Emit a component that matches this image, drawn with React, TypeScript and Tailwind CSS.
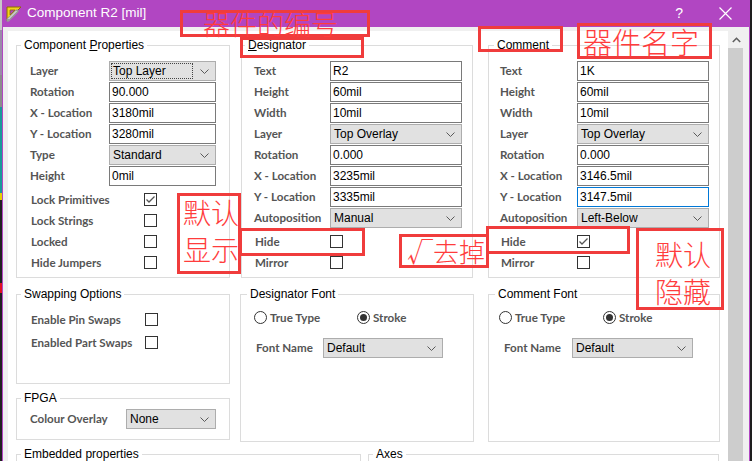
import React from "react";

type FieldRow = {
  label: string;
  value: string;
  kind?: "input" | "select";
  focus?: boolean;
  dotted?: boolean;
};

const labelCls =
  "font-['Lato','Liberation_Sans',sans-serif] font-bold text-[11.6px] text-[#555555] whitespace-nowrap";
const noteText =
  "font-['Noto_Sans_CJK_SC','Noto_Sans',sans-serif] font-light text-[#ff3c3c] leading-none whitespace-nowrap";

const Chevron = () => (
  <svg width="9" height="5" viewBox="0 0 9 5" className="shrink-0">
    <path d="M0.5 0.5 L4.5 4.5 L8.5 0.5" fill="none" stroke="#5a5a5a" strokeWidth="1" />
  </svg>
);

const Select = ({ value, w, dotted }: { value: string; w: string; dotted?: boolean }) => (
  <div className={`${w} h-[20px] border border-[#adadad] bg-[#e1e1e1] flex items-center pl-[2px] pr-[6px]`}>
    <span
      className={`flex-1 pl-[1px] mr-[8px] text-[12px] leading-[14px] text-black ${
        dotted ? "outline outline-1 outline-dotted outline-[#444]" : ""
      }`}
    >
      {value}
    </span>
    <Chevron />
  </div>
);

const Input = ({ value, w, focus }: { value: string; w: string; focus?: boolean }) => (
  <div
    className={`${w} h-[20px] border ${
      focus ? "border-[#0078d7]" : "border-[#7a7a7a]"
    } bg-white flex items-center px-[2px] text-[12px] text-black`}
  >
    {value}
  </div>
);

const Check = ({ checked }: { checked?: boolean }) => (
  <div className="w-[13px] h-[13px] border border-[#333] bg-white flex items-center justify-center">
    {checked && (
      <svg width="11" height="11" viewBox="0 0 11 11">
        <path d="M1.5 5.5 L4 8 L9.5 2.5" fill="none" stroke="#555" strokeWidth="1.3" />
      </svg>
    )}
  </div>
);

const Radio = ({ checked }: { checked?: boolean }) => (
  <div className="w-[13px] h-[13px] rounded-full border border-[#333] bg-white flex items-center justify-center">
    {checked && <div className="w-[7px] h-[7px] rounded-full bg-[#333]" />}
  </div>
);

const Group = ({
  title,
  className,
  legendCls = "ml-[4px]",
  children,
}: {
  title: React.ReactNode;
  className: string;
  legendCls?: string;
  children?: React.ReactNode;
}) => (
  <fieldset className={`shrink-0 border border-[#dcdcdc] ${className}`}>
    <legend className={`${legendCls} px-[3px] text-[12px] leading-[16px] text-black`}>{title}</legend>
    {children}
  </fieldset>
);

const Fields = ({ rows, labelW, fieldW }: { rows: FieldRow[]; labelW: string; fieldW: string }) => (
  <div className="flex flex-col gap-[1px]">
    {rows.map(r => (
      <div key={r.label} className="flex items-center">
        <span className={`${labelW} ${labelCls}`}>{r.label}</span>
        {r.kind === "select" ? (
          <Select value={r.value} w={fieldW} dotted={r.dotted} />
        ) : (
          <Input value={r.value} w={fieldW} focus={r.focus} />
        )}
      </div>
    ))}
  </div>
);

const Checks = ({ items, labelW }: { items: [string, boolean][]; labelW: string }) => (
  <div className="flex flex-col mt-[3px]">
    {items.map(([label, on]) => (
      <div key={label} className="h-[21px] flex items-center">
        <span className={`${labelW} pl-[1px] ${labelCls}`}>{label}</span>
        <Check checked={on} />
      </div>
    ))}
  </div>
);

const compRows: FieldRow[] = [
  { label: "Layer", value: "Top Layer", kind: "select", dotted: true },
  { label: "Rotation", value: "90.000" },
  { label: "X - Location", value: "3180mil" },
  { label: "Y - Location", value: "3280mil" },
  { label: "Type", value: "Standard", kind: "select" },
  { label: "Height", value: "0mil" },
];

const desRows: FieldRow[] = [
  { label: "Text", value: "R2" },
  { label: "Height", value: "60mil" },
  { label: "Width", value: "10mil" },
  { label: "Layer", value: "Top Overlay", kind: "select" },
  { label: "Rotation", value: "0.000" },
  { label: "X - Location", value: "3235mil" },
  { label: "Y - Location", value: "3335mil" },
  { label: "Autoposition", value: "Manual", kind: "select" },
];

const comRows: FieldRow[] = [
  { label: "Text", value: "1K" },
  { label: "Height", value: "60mil" },
  { label: "Width", value: "10mil" },
  { label: "Layer", value: "Top Overlay", kind: "select" },
  { label: "Rotation", value: "0.000" },
  { label: "X - Location", value: "3146.5mil" },
  { label: "Y - Location", value: "3147.5mil", focus: true },
  { label: "Autoposition", value: "Left-Below", kind: "select" },
];

const FontGroup = ({
  title,
  className,
  padL,
  itemW,
  nameCls,
  selW,
}: {
  title: string;
  className: string;
  padL: string;
  itemW: string;
  nameCls: string;
  selW: string;
}) => (
  <Group title={title} className={className} legendCls="ml-[6px]">
    <div className={`${padL} pt-[6px]`}>
      <div className="h-[20px] flex items-center">
        <div className={`${itemW} flex items-center gap-[3px]`}>
          <Radio />
          <span className={labelCls}>True Type</span>
        </div>
        <div className="flex items-center gap-[3px]">
          <Radio checked />
          <span className={labelCls}>Stroke</span>
        </div>
      </div>
      <div className="mt-[10px] flex items-center">
        <span className={`${nameCls} ${labelCls}`}>Font Name</span>
        <Select value="Default" w={selW} />
      </div>
    </div>
  </Group>
);

const AppIcon = () => (
  <svg width="18" height="18" viewBox="0 0 18 18">
    <path d="M2 2 H16 L2 16 Z" fill="#f2d21b" stroke="#8a6d00" strokeWidth="1" />
    <path d="M5 5 H10 L5 10 Z" fill="#b146c2" stroke="#8a6d00" strokeWidth="0.8" />
    <path d="M3 15 L12 6" stroke="#9a9a9a" strokeWidth="3.2" strokeLinecap="round" />
    <path d="M3.5 14 L11.5 6" stroke="#f4f4f4" strokeWidth="1" />
  </svg>
);

export default function App() {
  return (
    <div className="relative w-[752px] h-[461px] overflow-hidden flex bg-[#1e1e1e] font-['Liberation_Sans',sans-serif]">
      {/* background app slice */}
      <div className="w-[2px] shrink-0 flex flex-col">
        <div className="h-[30px] bg-[#c8c8c8]" />
        <div className="h-[45px] bg-[#9a8aa8]" />
        <div className="h-[32px] bg-[#8c8c8c]" />
        <div className="h-[86px] bg-[#1a9a9a]" />
        <div className="h-[7px] bg-[#e8d000]" />
        <div className="h-[83px] bg-[#202020]" />
        <div className="h-[10px] bg-[#e01020]" />
        <div className="flex-1 bg-[#202020]" />
      </div>

      {/* dialog */}
      <div className="w-[748px] shrink-0 border-x border-[#b146c2] flex flex-col">
        <div className="h-[27px] shrink-0 bg-[#b146c2] flex items-center pl-[2px] text-white">
          <AppIcon />
          <span className="ml-[4px] text-[13.5px]">Component R2 [mil]</span>
          <span className="ml-auto text-[14px] mr-[36px]">?</span>
          <svg width="13" height="13" viewBox="0 0 13 13" className="mr-[17px]">
            <path d="M0.5 0.5 L12.5 12.5 M12.5 0.5 L0.5 12.5" stroke="white" strokeWidth="1.2" />
          </svg>
        </div>

        <div className="flex-1 min-h-0 overflow-hidden flex bg-[#f0f0f0] pt-[4px] pl-[5px]">
          <div className="w-[720px] shrink-0 bg-white pl-[8px] pt-[6px]">
            {/* row 1 */}
            <div className="flex">
              <Group
                className="w-[214px] h-[241px]"
                title={
                  <>
                    Component <span className="underline">P</span>roperties
                  </>
                }
              >
                <div className="pl-[13px] pt-[8px]">
                  <Fields rows={compRows} labelW="w-[79px]" fieldW="w-[107px]" />
                  <Checks
                    labelW="w-[114px]"
                    items={[
                      ["Lock Primitives", true],
                      ["Lock Strings", false],
                      ["Locked", false],
                      ["Hide Jumpers", false],
                    ]}
                  />
                </div>
              </Group>

              <Group
                className="ml-[11px] w-[232px] h-[241px]"
                legendCls="ml-[3px]"
                title={
                  <>
                    <span className="underline">D</span>esignator
                  </>
                }
              >
                <div className="pl-[12px] pt-[8px]">
                  <Fields rows={desRows} labelW="w-[76px]" fieldW="w-[132px]" />
                  <Checks
                    labelW="w-[76px]"
                    items={[
                      ["Hide", false],
                      ["Mirror", false],
                    ]}
                  />
                </div>
              </Group>

              <Group className="ml-[15px] w-[232px] h-[241px]" legendCls="ml-[5px]" title="Comment">
                <div className="pl-[11px] pt-[8px]">
                  <Fields rows={comRows} labelW="w-[77px]" fieldW="w-[132px]" />
                  <Checks
                    labelW="w-[77px]"
                    items={[
                      ["Hide", true],
                      ["Mirror", false],
                    ]}
                  />
                </div>
              </Group>
            </div>

            {/* row 2 */}
            <div className="flex mt-[8px]">
              <div className="w-[214px] flex flex-col">
                <Group className="h-[98px]" title="Swapping Options">
                  <div className="pl-[13px] pt-[7px] flex flex-col gap-[2px]">
                    {["Enable Pin Swaps", "Enabled Part Swaps"].map(t => (
                      <div key={t} className="h-[21px] flex items-center">
                        <span className={`w-[115px] pl-[1px] ${labelCls}`}>{t}</span>
                        <Check />
                      </div>
                    ))}
                  </div>
                </Group>
                <Group className="mt-[6px] h-[50px]" title="FPGA">
                  <div className="pl-[13px] pt-[3px] flex items-center">
                    <span className={`w-[96px] ${labelCls}`}>Colour Overlay</span>
                    <Select value="None" w="w-[90px]" />
                  </div>
                </Group>
              </div>

              <FontGroup
                title="Designator Font"
                className="ml-[10px] w-[234px] h-[156px]"
                padL="pl-[13px]"
                itemW="w-[103px]"
                nameCls="w-[69px] pl-[2px]"
                selW="w-[120px]"
              />
              <FontGroup
                title="Comment Font"
                className="ml-[14px] w-[232px] h-[156px]"
                padL="pl-[10px]"
                itemW="w-[104px]"
                nameCls="w-[73px] pl-[5px]"
                selW="w-[121px]"
              />
            </div>

            {/* row 3 */}
            <div className="flex mt-[4px]">
              <Group className="w-[345px] h-[40px]" title="Embedded properties" />
              <Group className="ml-[7px] w-[351px] h-[40px]" legendCls="ml-[4px]" title="Axes" />
            </div>
          </div>

          {/* scrollbar */}
          <div className="w-[16px] shrink-0 flex flex-col">
            <div className="h-[17px] flex items-center justify-center">
              <svg width="9" height="6" viewBox="0 0 9 6">
                <path d="M0.8 5 L4.5 1.3 L8.2 5" fill="none" stroke="#606060" strokeWidth="1.6" />
              </svg>
            </div>
            <div className="flex-1 bg-[#cdcdcd] mr-[1px]" />
          </div>
        </div>
      </div>

      <div className="flex-1 bg-[#1e1e1e]" />

      {/* red annotations */}
      <div className="absolute left-[180px] top-[10px] w-[190px] h-[27px] border-[3px] border-[#f03c3c] flex items-center pl-[20px]">
        <span className={`${noteText} text-[27px]`}>器件的编号</span>
      </div>
      <div className="absolute left-[240px] top-[37px] w-[124px] h-[21px] border-[3px] border-[#f03c3c]" />
      <div className="absolute left-[478px] top-[26px] w-[85px] h-[26px] border-[3px] border-[#f03c3c]" />
      <div className="absolute left-[577px] top-[23px] w-[135px] h-[36px] border-[3px] border-[#f03c3c] flex items-center pl-[3px]">
        <span className={`${noteText} text-[29px]`}>器件名字</span>
      </div>
      <div className="absolute left-[177px] top-[193px] w-[64px] h-[81px] border-[3px] border-[#f03c3c] flex flex-col pl-[3px] pt-[2px] gap-[9px]">
        <span className={`${noteText} text-[28px]`}>默认</span>
        <span className={`${noteText} text-[28px]`}>显示</span>
      </div>
      <div className="absolute left-[239px] top-[228px] w-[126px] h-[28px] border-[3px] border-[#f03c3c]" />
      <div className="absolute left-[399px] top-[234px] w-[90px] h-[34px] border-[3px] border-[#f03c3c] flex items-center pl-[5px]">
        <span className={`${noteText} text-[26px]`}>√去掉</span>
      </div>
      <div className="absolute left-[486px] top-[226px] w-[144px] h-[28px] border-[3px] border-[#f03c3c]" />
      <div className="absolute left-[636px] top-[228px] w-[88px] h-[82px] border-[3px] border-[#f03c3c] flex flex-col pl-[16px] pt-[9px] gap-[9px]">
        <span className={`${noteText} text-[28px]`}>默认</span>
        <span className={`${noteText} text-[28px]`}>隐藏</span>
      </div>
    </div>
  );
}
